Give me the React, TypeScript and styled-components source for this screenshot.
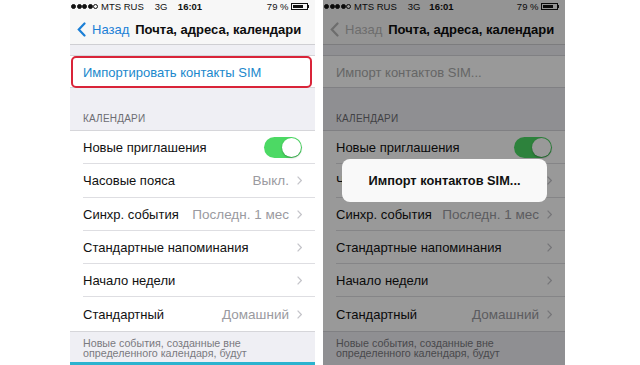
import React from 'react';
import styled, { createGlobalStyle } from 'styled-components';

const GlobalStyle = createGlobalStyle`
  html, body {
    margin: 0;
    padding: 0;
    background: #ffffff;
  }
  body {
    font-family: 'Liberation Sans', Arial, sans-serif;
  }
`;

const StyledPage = styled.div`
  display: flex;
  gap: 8px;
  height: 365px;
  overflow: hidden;
  padding: 0 0 0 70px;
`;

const StyledPhone = styled.div<{ $width: number }>`
  background: #efeff4;
  display: flex;
  flex-direction: column;
  flex-shrink: 0;
  height: 365px;
  overflow: hidden;
  position: relative;
  width: ${({ $width }) => $width}px;

  & > * {
    flex-shrink: 0;
  }
`;

const StyledStatusBar = styled.div`
  align-items: center;
  background: #f7f7f7;
  color: #111;
  display: grid;
  font-size: 9.5px;
  grid-template-columns: 1fr auto 1fr;
  height: 12px;
  padding: 0 6px 0 1px;
`;

const StyledStatusLeft = styled.div`
  align-items: center;
  display: flex;
  gap: 3px;

  & > span:last-child {
    margin-left: 8px;
  }
`;

const StyledDots = styled.div`
  display: flex;
  gap: 0.5px;
`;

const StyledDot = styled.i<{ $empty?: boolean }>`
  border: 0.8px solid #111;
  border-radius: 50%;
  box-sizing: border-box;
  background: ${({ $empty }) => ($empty ? 'transparent' : '#111')};
  height: 5px;
  width: 5px;
`;

const StyledTime = styled.span`
  font-weight: 700;
`;

const StyledStatusRight = styled.div`
  align-items: center;
  display: flex;
  gap: 2px;
  justify-content: flex-end;
`;

const StyledBattery = styled.div`
  align-items: center;
  display: flex;

  & > div {
    border: 1px solid #111;
    box-sizing: border-box;
    height: 7px;
    padding: 1px;
    width: 17px;
  }

  & > div > div {
    background: #111;
    height: 100%;
    width: 80%;
  }

  & > span {
    background: #111;
    height: 3px;
    width: 1.5px;
  }
`;

const StyledNavBar = styled.div<{ $tint: string }>`
  align-items: center;
  background: #f7f7f7;
  border-bottom: 1px solid #cfcfd3;
  box-sizing: border-box;
  display: flex;
  font-size: 13px;
  height: 33px;
  padding: 3px 0 0 7px;

  & svg {
    margin: 0 6px 0 0;
    stroke: ${({ $tint }) => $tint};
  }

  & > span {
    color: ${({ $tint }) => $tint};
    margin: 0 6px 0 0;
  }

  & > strong {
    color: #0d0d0d;
    font-size: 13px;
    font-weight: 700;
    white-space: nowrap;
  }
`;

const StyledGroup = styled.div<{ $top: number }>`
  background: #ffffff;
  border-bottom: 1px solid #d6d6da;
  border-top: 1px solid #d6d6da;
  margin: ${({ $top }) => $top}px 0 0;
`;

const StyledImportRow = styled.div<{ $color: string; $highlight?: boolean }>`
  align-items: center;
  box-sizing: border-box;
  color: ${({ $color }) => $color};
  display: flex;
  font-size: 13px;
  height: 31px;
  padding: 1px 0 0 13px;
  position: relative;

  &::after {
    border: 2px solid #d92439;
    border-radius: 5px;
    bottom: -1px;
    content: '';
    display: ${({ $highlight }) => ($highlight ? 'block' : 'none')};
    left: 1px;
    position: absolute;
    right: 3px;
    top: 0;
  }
`;

const StyledSectionHeader = styled.div`
  align-items: flex-end;
  box-sizing: border-box;
  color: #6d6d72;
  display: flex;
  font-size: 10px;
  height: 42px;
  letter-spacing: 0.2px;
  padding: 0 0 6px 13px;
`;

const StyledRow = styled.div`
  align-items: center;
  box-sizing: border-box;
  color: #111;
  display: flex;
  font-size: 13px;
  height: 33.3px;
  justify-content: space-between;
  padding: 0 13px;
  position: relative;

  &:not(:last-child)::after {
    background: #dedee2;
    bottom: 0;
    content: '';
    height: 1px;
    left: 13px;
    position: absolute;
    right: 0;
  }
`;

const StyledValue = styled.span`
  align-items: center;
  color: #9a9aa0;
  display: flex;
  font-size: 13.5px;
  gap: 8px;
  white-space: nowrap;

  & svg {
    stroke: #c4c4c9;
  }
`;

const StyledToggle = styled.div`
  background: #4cd964;
  border-radius: 11px;
  height: 21px;
  position: relative;
  width: 38px;

  &::after {
    background: #ffffff;
    border-radius: 50%;
    box-shadow: 0 1px 2px rgba(0, 0, 0, 0.3);
    content: '';
    height: 19px;
    position: absolute;
    right: 1px;
    top: 1px;
    width: 19px;
  }
`;

const StyledFooter = styled.div`
  box-sizing: border-box;
  color: #7a7a80;
  font-size: 10.7px;
  height: 30px;
  line-height: 10.5px;
  padding: 6px 13px 0;
`;

const StyledAccent = styled.div<{ $color: string }>`
  background: ${({ $color }) => $color};
  height: 4px;
`;

const StyledDim = styled.div`
  background: rgba(0, 0, 0, 0.4);
  inset: 0;
  position: absolute;
`;

const StyledAlert = styled.div`
  align-items: center;
  background: #f9f9f9;
  border-radius: 8px;
  color: #111;
  display: flex;
  font-size: 12.8px;
  font-weight: 700;
  height: 43px;
  justify-content: center;
  left: 19px;
  position: absolute;
  top: 159px;
  width: 205px;
`;

const Chevron = () => (
  <svg width="5" height="9" viewBox="0 0 5 9" fill="none" strokeWidth="1.2">
    <path d="M0.6 0.6 L4.3 4.5 L0.6 8.4" />
  </svg>
);

const BackChevron = () => (
  <svg width="9" height="15" viewBox="0 0 9 15" fill="none" strokeWidth="2.2" strokeLinecap="round">
    <path d="M7.5 1.5 L1.8 7.5 L7.5 13.5" />
  </svg>
);

const rows: { label: string; value?: string; toggle?: boolean }[] = [
  { label: 'Новые приглашения', toggle: true },
  { label: 'Часовые пояса', value: 'Выкл.' },
  { label: 'Синхр. события', value: 'Последн. 1 мес' },
  { label: 'Стандартные напоминания', value: '' },
  { label: 'Начало недели', value: '' },
  { label: 'Стандартный', value: 'Домашний' },
];

interface PhoneProps {
  width: number;
  dimmed?: boolean;
}

const Phone = ({ width, dimmed }: PhoneProps) => (
  <StyledPhone $width={width}>
    <StyledStatusBar>
      <StyledStatusLeft>
        <StyledDots>
          <StyledDot />
          <StyledDot />
          <StyledDot />
          <StyledDot />
          <StyledDot $empty />
        </StyledDots>
        <span>MTS RUS</span>
        <span>3G</span>
      </StyledStatusLeft>
      <StyledTime>16:01</StyledTime>
      <StyledStatusRight>
        <span>79 %</span>
        <StyledBattery>
          <div>
            <div />
          </div>
          <span />
        </StyledBattery>
      </StyledStatusRight>
    </StyledStatusBar>

    <StyledNavBar $tint={dimmed ? '#b6b6b6' : '#1b7fd6'}>
      <BackChevron />
      <span>Назад</span>
      <strong>Почта, адреса, календари</strong>
    </StyledNavBar>

    <StyledGroup $top={10}>
      <StyledImportRow $color={dimmed ? '#aaaaaa' : '#2088cc'} $highlight={!dimmed}>
        {dimmed ? 'Импорт контактов SIM...' : 'Импортировать контакты SIM'}
      </StyledImportRow>
    </StyledGroup>

    <StyledSectionHeader>КАЛЕНДАРИ</StyledSectionHeader>

    <StyledGroup $top={0}>
      {rows.map((row) => (
        <StyledRow key={row.label}>
          <span>{row.label}</span>
          {row.toggle ? (
            <StyledToggle />
          ) : (
            <StyledValue>
              {row.value}
              <Chevron />
            </StyledValue>
          )}
        </StyledRow>
      ))}
    </StyledGroup>

    <StyledFooter>
      Новые события, созданные вне
      <br />
      определенного календаря, будут
    </StyledFooter>
    <StyledAccent $color={dimmed ? 'transparent' : '#2bb3cf'} />

    {dimmed && (
      <>
        <StyledDim />
        <StyledAlert>Импорт контактов SIM...</StyledAlert>
      </>
    )}
  </StyledPhone>
);

export default function App() {
  return (
    <>
      <GlobalStyle />
      <StyledPage>
        <Phone width={245} />
        <Phone width={242} dimmed />
      </StyledPage>
    </>
  );
}
